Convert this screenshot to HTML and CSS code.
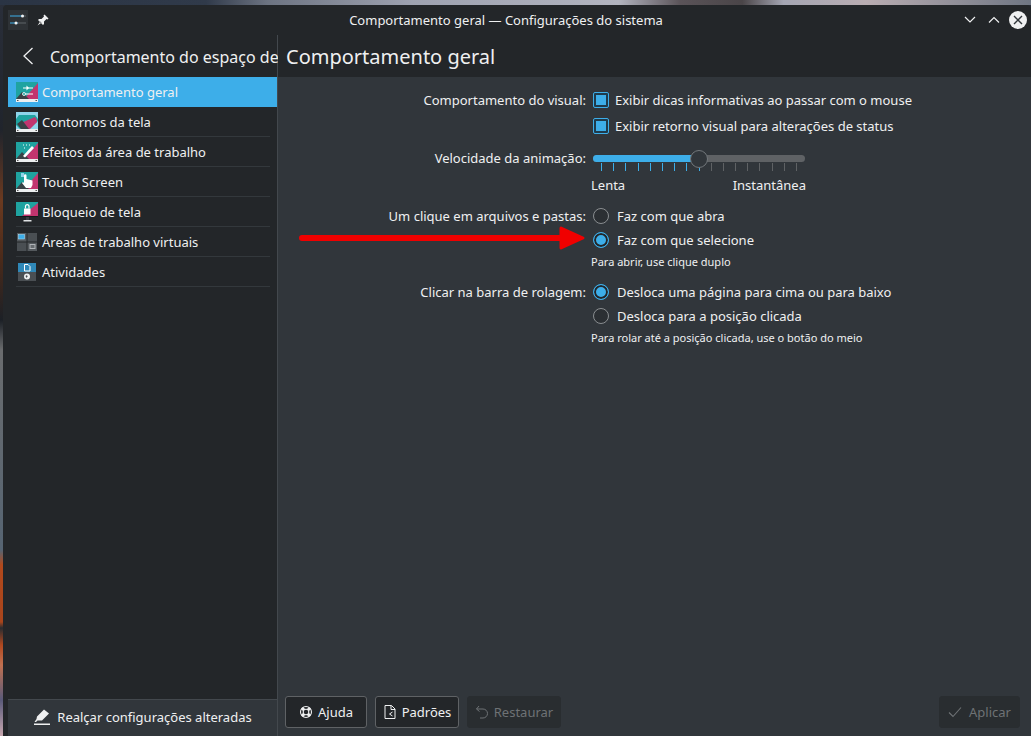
FILE: index.html
```html
<!DOCTYPE html>
<html lang="pt-BR">
<head>
<meta charset="utf-8">
<title>Comportamento geral — Configurações do sistema</title>
<link rel="stylesheet" href="styles.css">
</head>
<body>
<svg class="defs" width="0" height="0">
  <defs>
    <symbol id="screen" viewBox="0 0 22 20">
      <rect width="22" height="20" fill="#1fa3a0"/>
      <path d="M22 1V17H8Z" fill="#c2356f"/>
      <path d="M0 17 6 10 13 17Z" fill="#3a4246"/>
      <rect y="17" width="22" height="3" fill="#eceff0"/>
      <rect x="1" y="18" width="1.5" height="1" fill="#555"/>
      <rect x="19.500" y="18" width="1.500" height="1" fill="#555"/>
    </symbol>
  </defs>
</svg>
<div class="window">
  <header class="titlebar">
    <div class="tb-left">
      <span class="app-icon">
        <svg width="18" height="14" viewBox="0 0 18 14"><path d="M1 3H15M1 10H9" stroke="#3daee9" stroke-width="1"/><path d="M15 3H17M9 10H17" stroke="#5f6569" stroke-width="1"/><circle cx="13.500" cy="3" r="1.500" fill="#eff0f1"/><circle cx="7" cy="10" r="1.500" fill="#eff0f1"/></svg>
      </span>
      <svg class="pin" width="14" height="14" viewBox="0 0 14 14"><path d="M8.500 1.500 12.500 5.500 11.500 6.500 10.500 6 8 8.500 8 11 7 12 2 7 3 6 5.500 6 8 3.500 7.500 2.500ZM4.200 8.500 1.500 12.500 5.500 9.800Z" fill="#eff0f1"/></svg>
    </div>
    <div class="tb-title">Comportamento geral — Configurações do sistema</div>
    <div class="tb-right">
      <svg width="12" height="8" viewBox="0 0 12 8"><path d="M1 1 6 6 11 1" fill="none" stroke="#eff0f1" stroke-width="1.200"/></svg>
      <svg width="12" height="8" viewBox="0 0 12 8"><path d="M1 6.500 6 1.500 11 6.500" fill="none" stroke="#eff0f1" stroke-width="1.200"/></svg>
      <span class="tb-close"><svg width="10" height="10" viewBox="0 0 10 10"><path d="M1 1 9 9M9 1 1 9" stroke="#31363b" stroke-width="1.400"/></svg></span>
    </div>
  </header>
  <div class="body">
    <aside class="sidebar">
      <div class="side-head">
        <svg class="back" width="12" height="18" viewBox="0 0 12 18"><path d="M10.500 1 2 9 10.500 17" fill="none" stroke="#eff0f1" stroke-width="1.300"/></svg>
        <span class="side-title">Comportamento do espaço de</span>
      </div>
      <nav class="nav">
        <a class="nav-item selected">
          <svg class="nav-icon" width="22" height="20" viewBox="0 0 22 20"><use href="#screen"/><path d="M7 6H17M7 12H17" stroke="#fff" stroke-width="1"/><path d="M10.500 3.500 13 6 10.500 8.500Z" fill="#fff"/><circle cx="8" cy="12" r="1.500" fill="#1fa3a0" stroke="#fff" stroke-width=".8"/></svg>
          <span>Comportamento geral</span>
        </a>
        <a class="nav-item">
          <svg class="nav-icon" width="22" height="20" viewBox="0 0 22 20"><rect width="22" height="17" fill="#8fd4ea"/><path d="M3 3H19L22 7V9L13 17H4L0 13V7Z" fill="#1fa3a0"/><path d="M19 5 21 8V10L14 17H7L5 11Z" fill="#c2356f"/><path d="M1 12 6 8 13 17H5Z" fill="#3a4246"/><rect y="17" width="22" height="3" fill="#eceff0"/><rect x="1" y="18" width="1.5" height="1" fill="#555"/><rect x="19.500" y="18" width="1.500" height="1" fill="#555"/></svg>
          <span>Contornos da tela</span>
        </a>
        <a class="nav-item">
          <svg class="nav-icon" width="22" height="20" viewBox="0 0 22 20"><use href="#screen"/><path d="M7 14 16 4 18 6 9 15.500Z" fill="#fff"/><path d="M7 3H8M10 3H11M8 6H9M13 3H14" stroke="#fff" stroke-width="1"/></svg>
          <span>Efeitos da área de trabalho</span>
        </a>
        <a class="nav-item">
          <svg class="nav-icon" width="22" height="20" viewBox="0 0 22 20"><use href="#screen"/><path d="M5 1H8V5H5Z" fill="#8fd4ea"/><path d="M8 3.500A1 1 0 0 1 10.500 3.500V7L16.500 8.500V13L15 16H10L6 11 7 10 8 11Z" fill="#fff"/></svg>
          <span>Touch Screen</span>
        </a>
        <a class="nav-item">
          <svg class="nav-icon" width="22" height="20" viewBox="0 0 22 20"><rect width="22" height="14" fill="#1fa3a0"/><path d="M22 1V14H6Z" fill="#c2356f"/><rect y="14" width="22" height="1" fill="#15181a"/><rect x="8" y="6.500" width="6.500" height="6" fill="#fff"/><path d="M9.500 6.500V4A1.800 1.800 0 0 1 13 4V6.500" fill="none" stroke="#fff" stroke-width="1.200"/><rect x="10" y="15" width="3" height="3" fill="#3a3f43"/><rect x="7.500" y="18" width="8" height="1.500" fill="#dfe2e4"/></svg>
          <span>Bloqueio de tela</span>
        </a>
        <a class="nav-item">
          <svg class="nav-icon" width="22" height="18" viewBox="0 0 22 18"><rect x="1" width="9.500" height="8.500" fill="#54595d"/><rect x="11.500" width="9.500" height="8.500" fill="#4a4f53"/><rect x="1" y="9.500" width="9.500" height="8.500" fill="#4a4f53"/><rect x="11.500" y="9.500" width="9.500" height="8.500" fill="#54595d"/><rect x="2.500" y="1.500" width="6" height="4.500" fill="#3daee9" stroke="#9fd8f4" stroke-width=".6"/><rect x="14" y="11.500" width="5" height="4" fill="#666b6f" stroke="#b0b4b7" stroke-width="1"/></svg>
          <span>Áreas de trabalho virtuais</span>
        </a>
        <a class="nav-item">
          <svg class="nav-icon" width="22" height="18" viewBox="0 0 22 18"><rect x="2" width="18" height="9" fill="#2f88b8"/><rect x="2" y="9" width="18" height="9" fill="#4a4f53"/><path d="M8.500 1.500H12L14 3.500V8H8.500Z" fill="none" stroke="#fff" stroke-width="1"/><circle cx="11" cy="13.500" r="3" fill="#eff0f1"/><path d="M9.500 13 11 12 11.500 13.500 10.500 15Z" fill="#4a4f53"/></svg>
          <span>Atividades</span>
        </a>
      </nav>
      <div class="side-foot">
        <svg width="18" height="18" viewBox="0 0 18 18"><path d="M11 1.500 16 5.500 9 12.500 4.500 12.500 3 14 1.500 14 3.500 11 4 8.500Z" fill="#eff0f1"/><rect x="1" y="15.500" width="16" height="1.500" fill="#eff0f1"/></svg>
        <span>Realçar configurações alteradas</span>
      </div>
    </aside>
    <main class="main">
      <h1 class="page-title">Comportamento geral</h1>
      <div class="form">
        <div class="line">
          <label class="lbl">Comportamento do visual:</label>
          <div class="fld"><span class="check"></span><span>Exibir dicas informativas ao passar com o mouse</span></div>
        </div>
        <div class="line">
          <span class="lbl"></span>
          <div class="fld"><span class="check"></span><span>Exibir retorno visual para alterações de status</span></div>
        </div>
        <div class="line l-slider">
          <label class="lbl">Velocidade da animação:</label>
          <div class="slider">
            <div class="track"><div class="track-fill"></div><div class="handle"></div></div>
            <div class="ticks">
              <i class="on"></i><i class="on"></i><i class="on"></i><i class="on"></i><i class="on"></i><i class="on"></i><i class="on"></i><i class="on"></i><i class="on"></i>
              <i></i><i></i><i></i><i></i><i></i><i></i><i></i><i></i>
            </div>
          </div>
        </div>
        <div class="line l-scale">
          <span class="lbl"></span>
          <div class="scale"><span>Lenta</span><span>Instantânea</span></div>
        </div>
        <div class="line l-radio1">
          <label class="lbl">Um clique em arquivos e pastas:</label>
          <div class="fld"><span class="radio"></span><span>Faz com que abra</span></div>
        </div>
        <div class="line l-radio">
          <span class="lbl"></span>
          <div class="fld"><span class="radio on"></span><span>Faz com que selecione</span></div>
        </div>
        <div class="line l-hint">
          <span class="lbl"></span>
          <div class="hint">Para abrir, use clique duplo</div>
        </div>
        <div class="line l-radio2">
          <label class="lbl">Clicar na barra de rolagem:</label>
          <div class="fld"><span class="radio on"></span><span>Desloca uma página para cima ou para baixo</span></div>
        </div>
        <div class="line l-radio">
          <span class="lbl"></span>
          <div class="fld"><span class="radio"></span><span>Desloca para a posição clicada</span></div>
        </div>
        <div class="line l-hint">
          <span class="lbl"></span>
          <div class="hint">Para rolar até a posição clicada, use o botão do meio</div>
        </div>
      </div>
      <footer class="actions">
        <button class="btn b-help"><svg width="14" height="14" viewBox="0 0 14 14"><circle cx="7" cy="7" r="5.500" fill="none" stroke="#eff0f1" stroke-width="1.100"/><circle cx="7" cy="7" r="2.800" fill="none" stroke="#eff0f1" stroke-width="1.100"/><path d="M3 3 5 5M11 3 9 5M3 11 5 9M11 11 9 9" stroke="#eff0f1" stroke-width="3"/></svg>Ajuda</button>
        <button class="btn b-def"><svg width="14" height="14" viewBox="0 0 12 14"><path d="M1 .5H7.500L11 4V13.500H1Z" fill="none" stroke="#eff0f1" stroke-width="1"/><path d="M7 .5V4.500H11" fill="none" stroke="#eff0f1" stroke-width="1"/><path d="M8.500 7 5.500 9 8.500 11" fill="none" stroke="#eff0f1" stroke-width="1"/></svg>Padrões</button>
        <button class="btn off b-res"><svg width="14" height="14" viewBox="0 0 14 14"><path d="M4 1 1.500 4 4.500 6.500M1.500 4H8A4.500 4.500 0 0 1 8 13H5" fill="none" stroke="#6e7275" stroke-width="1"/></svg>Restaurar</button>
        <button class="btn off b-app"><svg width="14" height="12" viewBox="0 0 14 12"><path d="M1 6.500 5 10.500 13 1.500" fill="none" stroke="#6e7275" stroke-width="1.100"/></svg>Aplicar</button>
      </footer>
      <svg class="arrow" width="290" height="26" viewBox="0 0 290 26"><path d="M5 13H264" stroke="#f00000" stroke-width="6" stroke-linecap="round"/><path d="M264 3 286 13 264 23Z" fill="#f00000" stroke="#f00000" stroke-width="3" stroke-linejoin="round"/></svg>
    </main>
  </div>
</div>
</body>
</html>
```
FILE: styles.css
```css
* { box-sizing: border-box; }
html, body { height: 100%; margin: 0; }
body {
  overflow: hidden;
  padding: 5px 0 0 3px;
  background:
    linear-gradient(90deg, #2a3444 0, #303a4a 20%, #6d7482 26%, #9ea2b0 40%, #b2b4bf 60%, #5a5358 66%, #4a4548 72%, #a5a6b3 76%, #b9adb2 84%, #6f7683 100%) top / 100% 5px no-repeat,
    linear-gradient(180deg, #2a2f3a 0, #20242c 130px, #6b3a20 200px, #4a2a1a 260px, #1c2026 320px, #6a6c6e 350px, #566472 550px, #b2491c 565px, #a8451c 622px, #2a2c30 628px, #b0481f 645px, #c07050 665px, #5a5a7a 700px, #c8a8b0 736px);
  font-family: "Noto Sans", sans-serif;
  font-size: 13px;
  color: #eff0f1;
}
.defs { position: absolute; }
.window {
  height: 731px;
  display: flex;
  flex-direction: column;
  background: #232629;
  border-radius: 4px 4px 0 0;
  overflow: hidden;
}
.titlebar { height: 30px; flex: none; display: flex; align-items: center; }
.tb-left { width: 50px; padding-left: 5px; display: flex; align-items: center; gap: 8px; }
.app-icon {
  width: 20px; height: 20px;
  display: flex; align-items: center; justify-content: center;
  background: #2e3236;
}
.pin { flex: none; }
.tb-title { flex: 1; text-align: center; white-space: nowrap; }
.tb-right { width: 72px; flex: none; display: flex; align-items: center; justify-content: flex-end; padding-right: 4px; gap: 12px; }
.tb-close {
  width: 18px; height: 18px; margin-left: -3px;
  border-radius: 50%;
  background: #eff0f1;
  display: flex; align-items: center; justify-content: center;
}
.body { flex: 1; min-height: 0; display: flex; }
.sidebar {
  width: 275px; flex: none;
  padding-left: 5px;
  display: flex; flex-direction: column;
}
.side-head {
  height: 42px; flex: none;
  display: flex; align-items: center;
  padding-left: 14px;
  white-space: nowrap;
  border-right: 1px solid #43484d;
}
.back { flex: none; margin-right: 16px; }
.side-title { font-size: 16px; margin-top: 2px; }
.nav { flex: 1; border-right: 1px solid #43484d; }
.nav-item {
  height: 30px;
  display: flex; align-items: center;
  padding-left: 8px;
  gap: 4px;
  position: relative;
}
.nav-item:not(.selected)::after {
  content: "";
  position: absolute;
  left: 8px; right: 7px; bottom: 0;
  height: 1px;
  background: #33383c;
}
.nav-item.selected { background: #3daee9; }
.nav-icon { flex: none; }
.side-foot {
  height: 37px; flex: none;
  display: flex; align-items: center; justify-content: center;
  gap: 6px;
  padding-bottom: 3px;
  background: #31363b;
  border-top: 1px solid #43484d;
  border-right: 1px solid #43484d;
}
.main {
  flex: 1; min-width: 0;
  display: flex; flex-direction: column;
  background: #31363b;
  position: relative;
}
.page-title {
  height: 42px; flex: none;
  margin: 0;
  padding: 0 0 0 8px;
  display: flex; align-items: center;
  font-size: 20px; font-weight: 400;
  background: #232629;
}
.form { flex: 1; padding-top: 10px; }
.line { display: flex; align-items: center; height: 26px; }
.lbl { width: 308px; flex: none; margin-right: 7px; text-align: right; white-space: nowrap; }
.fld { display: flex; align-items: center; gap: 6px; }
.l-slider { margin-top: 6px; }
.l-scale { height: 24px; margin-top: 2px; }
.l-radio1 { margin-top: 7px; height: 24px; }
.l-radio { height: 24px; }
.l-radio2 { margin-top: 9px; height: 24px; }
.l-hint { height: 19px; }
.check {
  width: 16px; height: 16px;
  border: 1px solid #3daee9;
  border-radius: 2px;
  background: #1f3b4c;
  padding: 2px;
}
.check::after { content: ""; display: block; width: 100%; height: 100%; background: #3daee9; }
.radio {
  width: 16px; height: 16px; flex: none;
  margin-right: 2px;
  border: 1px solid #8a8e91;
  border-radius: 50%;
  background: #2b2f33;
}
.radio.on { border-color: #3daee9; background: #3daee9; box-shadow: inset 0 0 0 2px #232629; }
.slider { width: 212px; height: 26px; padding-top: 10px; }
.track { height: 7px; border-radius: 4px; background: #5f6265; position: relative; }
.track-fill { width: 106px; height: 100%; border-radius: 4px 0 0 4px; background: #3daee9; }
.handle {
  position: absolute; left: 97px; top: -5.5px;
  width: 18px; height: 18px;
  border: 1px solid #72777b;
  border-radius: 50%;
  background: #31363b;
}
.ticks { display: flex; justify-content: space-between; padding: 1px 8px 0; }
.ticks i { width: 1px; height: 8px; background: #5f6265; }
.ticks i.on { background: #3daee9; }
.scale { width: 215px; margin-left: -2px; display: flex; justify-content: space-between; }
.hint { font-size: 11px; margin-left: -2px; }
.actions {
  height: 40px; flex: none;
  padding-right: 11px; padding-left: 7px;
  display: flex; gap: 8px; align-items: flex-start;
}
.btn {
  height: 32px; padding: 0;
  display: flex; align-items: center; justify-content: center; gap: 5px;
  background: #232629;
  border: 1px solid #5f6265;
  border-radius: 3px;
  color: #eff0f1;
  font: inherit;
}
.btn.off { background: #292d30; border-color: #292d30; color: #6e7275; }
.b-help { width: 82px; }
.b-def { width: 84px; }
.b-res { width: 94px; }
.b-app { width: 81px; margin-left: auto; gap: 7px; }
.arrow { position: absolute; left: 19px; top: 190px; }
```
